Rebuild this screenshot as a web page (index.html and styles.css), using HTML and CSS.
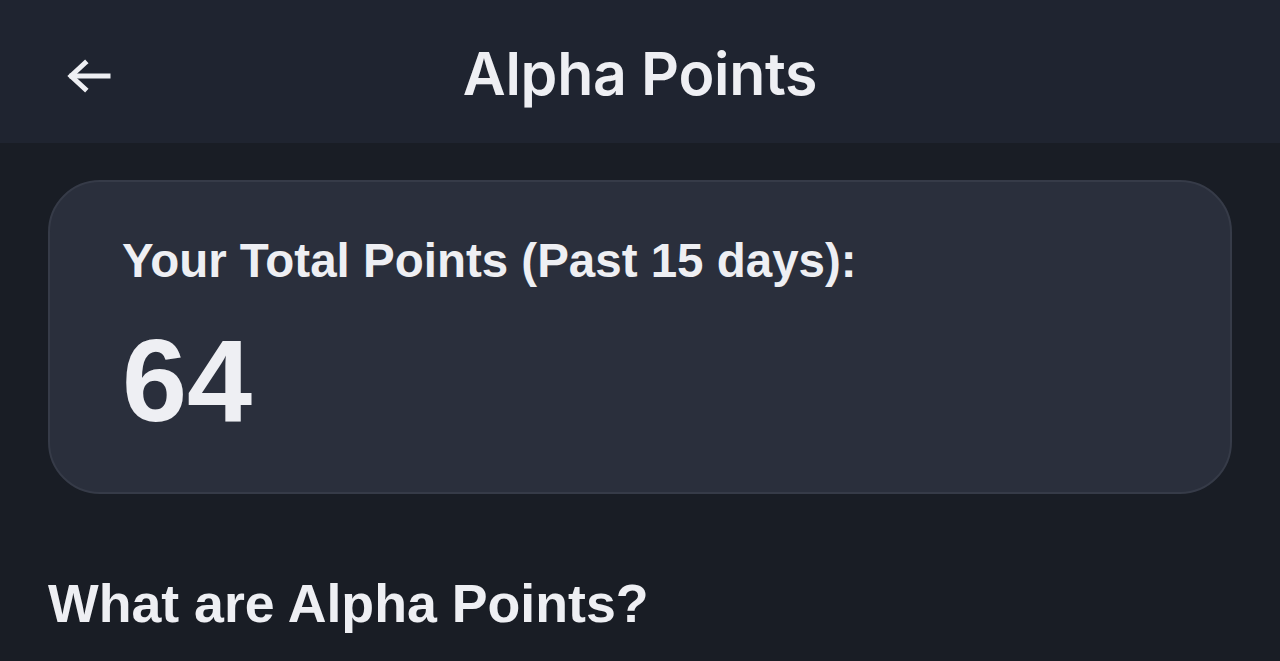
FILE: index.html
```html
<!DOCTYPE html>
<html lang="en">
<head>
    <meta charset="UTF-8">
    <meta name="viewport" content="width=device-width, initial-scale=1.0">
    <title>Alpha Points</title>
    <link rel="stylesheet" href="styles.css">
</head>
<body>

    <header class="top-bar">
        <button class="back-button" aria-label="Back">
            <svg width="48" height="40" viewBox="0 0 48 40" fill="none" stroke="currentColor" stroke-width="5" stroke-linecap="square" stroke-linejoin="miter">
                <path d="M44 18H8"/>
                <path d="M21 5L7 18L21 31"/>
            </svg>
        </button>
        <h1 class="page-title">Alpha Points</h1>
    </header>

    <main class="content">
        <section class="points-card">
            <p class="points-label">Your Total Points (Past 15 days):</p>
            <p class="points-value">64</p>
        </section>

        <h2 class="section-title">What are Alpha Points?</h2>
    </main>

</body>
</html>
```

FILE: styles.css
```css
:root {
    --bg-color: #191d25;
    --header-bg: #1f2430;
    --card-bg: #2a2f3c;
    --card-border: #363b48;
    --text-color: #eeeff3;
}

* {
    box-sizing: border-box;
    margin: 0;
    padding: 0;
}

body {
    background-color: var(--bg-color);
    color: var(--text-color);
    font-family: 'Liberation Sans', Arial, sans-serif;
    min-height: 100vh;
    overflow: hidden;
}

.top-bar {
    height: 143px;
    background-color: var(--header-bg);
    display: flex;
    align-items: center;
    justify-content: center;
    position: relative;
}

.back-button {
    position: absolute;
    left: 64px;
    top: 58px;
    background: none;
    border: none;
    color: var(--text-color);
    cursor: pointer;
    display: flex;
}

.page-title {
    font-family: 'Inter', sans-serif;
    font-size: 59px;
    font-weight: 600;
    letter-spacing: -0.3px;
    padding-top: 4px;
}

.content {
    padding: 37px 48px 0 48px;
}

.points-card {
    background-color: var(--card-bg);
    border: 2px solid var(--card-border);
    border-radius: 52px;
    height: 314px;
    padding: 50px 72px 30px;
}

.points-label {
    font-size: 47.5px;
    font-weight: 700;
    line-height: 1.2;
}

.points-value {
    font-size: 117px;
    font-weight: 700;
    line-height: 1;
    margin-top: 33px;
}

.section-title {
    font-size: 53.7px;
    font-weight: 700;
    margin-top: 78px;
}
```
